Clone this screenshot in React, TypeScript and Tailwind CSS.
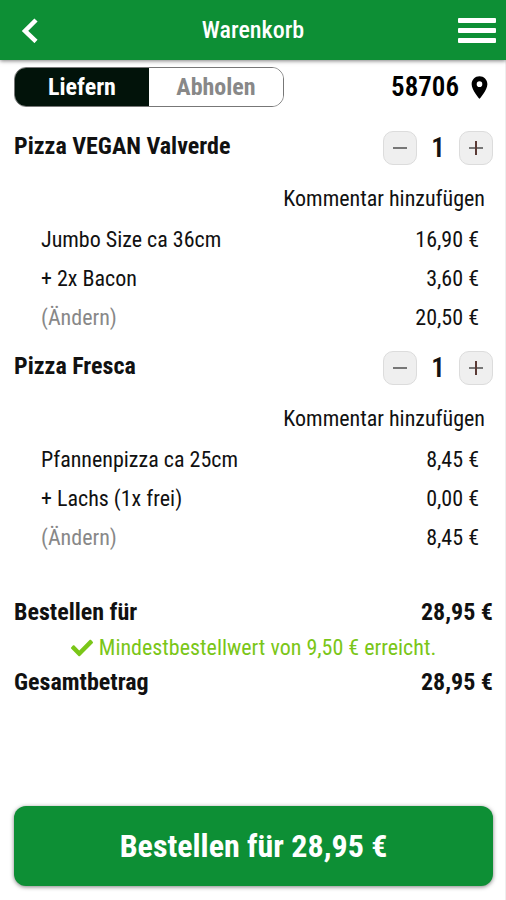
import React, { useState } from "react";
import { FaCheck } from "react-icons/fa";
import { MdLocationOn } from "react-icons/md";

interface Line {
  label: string;
  price: string;
}

interface Item {
  name: string;
  lines: Line[];
  total: string;
}

const items: Item[] = [
  {
    name: "Pizza VEGAN Valverde",
    lines: [
      { label: "Jumbo Size ca 36cm", price: "16,90 €" },
      { label: "+ 2x Bacon", price: "3,60 €" },
    ],
    total: "20,50 €",
  },
  {
    name: "Pizza Fresca",
    lines: [
      { label: "Pfannenpizza ca 25cm", price: "8,45 €" },
      { label: "+ Lachs (1x frei)", price: "0,00 €" },
    ],
    total: "8,45 €",
  },
];

const Header = () => (
  <header className="relative z-10 flex h-[60px] items-center justify-between bg-[#0d8f35] px-[10px] text-white shadow-[0_1px_4px_rgba(0,0,0,0.5)]">
    <button aria-label="Zurück" className="flex w-12 justify-start pl-[10px]">
      <svg width="20" height="26" viewBox="0 0 20 26" fill="none">
        <path d="M16 3 5 14l11 10.5" stroke="currentColor" strokeWidth="4.5" />
      </svg>
    </button>
    <h1 className="text-[24px] leading-[30px] font-medium">Warenkorb</h1>
    <button aria-label="Menü" className="flex w-12 justify-end">
      <svg width="38" height="28" viewBox="0 0 38 28" fill="currentColor">
        <rect y="2" width="38" height="5" rx="1" />
        <rect y="12" width="38" height="5" rx="1" />
        <rect y="22" width="38" height="5" rx="1" />
      </svg>
    </button>
  </header>
);

const Counter = () => {
  const [count, setCount] = useState(1);
  const box =
    "flex size-[34px] items-center justify-center rounded-[10px] border border-[#dcdcdc] bg-[#efefef]";

  return (
    <div className="flex items-center">
      <button
        aria-label="Weniger"
        className={box}
        onClick={() => setCount(Math.max(0, count - 1))}
      >
        <svg width="16" height="16" viewBox="0 0 16 16">
          <path d="M1 8h14" stroke="#777777" strokeWidth="2" />
        </svg>
      </button>
      <span className="w-[42px] text-center text-[27px] leading-[30px] font-semibold">{count}</span>
      <button aria-label="Mehr" className={box} onClick={() => setCount(count + 1)}>
        <svg width="16" height="16" viewBox="0 0 16 16">
          <path d="M1 8h14" stroke="#777777" strokeWidth="2" />
          <path d="M8 1v14" stroke="#5a3a35" strokeWidth="2" />
        </svg>
      </button>
    </div>
  );
};

const CartItem: React.FC<{ item: Item }> = ({ item }) => (
  <section className="pb-[11px]">
    <div className="flex h-10 items-center justify-between">
      <h2 className="pb-1 text-[24px] leading-[30px] font-bold">{item.name}</h2>
      <Counter />
    </div>
    <div className="mt-[10px] flex h-[42px] items-center justify-end pr-2">
      <button className="text-[22px] leading-[30px]">Kommentar hinzufügen</button>
    </div>
    <div className="pr-[14px] pl-[27px] text-[22px] leading-[39px]">
      {item.lines.map((line) => (
        <div key={line.label} className="flex justify-between">
          <span>{line.label}</span>
          <span>{line.price}</span>
        </div>
      ))}
      <div className="flex justify-between">
        <button className="text-[#888888]">(Ändern)</button>
        <span>{item.total}</span>
      </div>
    </div>
  </section>
);

const App = () => {
  const [mode, setMode] = useState("liefern");

  const tab = (name: string) =>
    mode === name ? "bg-[#02130a] text-white" : "bg-white text-[#888888]";

  return (
    <div className="flex min-h-screen flex-col bg-white font-['Roboto_Condensed','Roboto',sans-serif] text-[#111111]">
      <Header />
      <main className="flex grow flex-col border-r border-[#eeeeee] pt-[7px] pr-3 pb-[14px] pl-[14px]">
        <div className="flex items-center justify-between">
          <div className="flex h-10 w-[270px] overflow-hidden rounded-[12px] border border-[#777777] text-[24px] leading-[30px] font-bold">
            <button className={`flex-1 ${tab("liefern")}`} onClick={() => setMode("liefern")}>
              Liefern
            </button>
            <button className={`flex-1 ${tab("abholen")}`} onClick={() => setMode("abholen")}>
              Abholen
            </button>
          </div>
          <button className="flex items-center gap-[7px] text-[27px] leading-[30px] font-semibold text-black">
            58706
            <MdLocationOn size={27} />
          </button>
        </div>

        <div className="mt-[21px]">
          {items.map((item) => (
            <CartItem key={item.name} item={item} />
          ))}
        </div>

        <div className="mt-[27px] text-[24px] leading-[35px] font-bold">
          <div className="flex justify-between">
            <span>Bestellen für</span>
            <span>28,95 €</span>
          </div>
          <p className="flex items-center justify-center gap-[6px] text-[22px] leading-[35px] font-normal text-[#7ac618]">
            <FaCheck />
            Mindestbestellwert von 9,50 € erreicht.
          </p>
          <div className="flex justify-between">
            <span>Gesamtbetrag</span>
            <span>28,95 €</span>
          </div>
        </div>

        <button className="mt-auto h-20 w-full rounded-[12px] bg-[#0d8f35] text-[32px] leading-[40px] font-bold text-white shadow-[0_1px_4px_rgba(0,0,0,0.5)]">
          Bestellen für 28,95 €
        </button>
      </main>
    </div>
  );
};

export default App;
